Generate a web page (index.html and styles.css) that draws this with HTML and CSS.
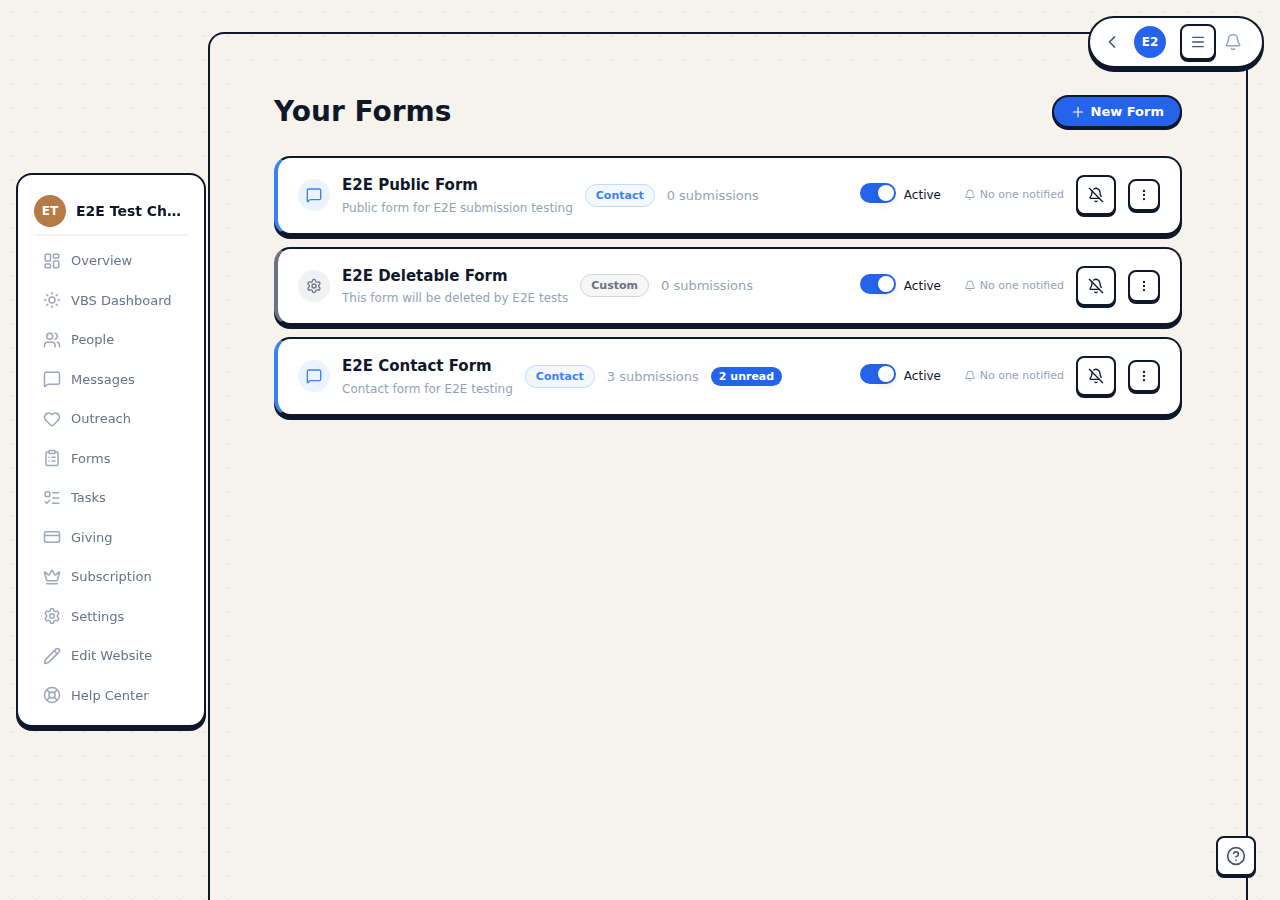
FILE: index.html
```html
<!DOCTYPE html>
<html lang="en">
<head>
    <meta charset="UTF-8">
    <meta name="viewport" content="width=device-width, initial-scale=1.0">
    <title>Your Forms</title>
    <link rel="stylesheet" href="styles.css">
</head>
<body>
    <!-- shared icons -->
    <svg class="sprite" aria-hidden="true">
        <symbol id="i-overview" viewBox="0 0 24 24"><rect x="3" y="3" width="7" height="9" rx="1"/><rect x="14" y="3" width="7" height="5" rx="1"/><rect x="14" y="12" width="7" height="9" rx="1"/><rect x="3" y="16" width="7" height="5" rx="1"/></symbol>
        <symbol id="i-sun" viewBox="0 0 24 24"><circle cx="12" cy="12" r="4"/><path d="M12 2v2M12 20v2M4.93 4.93l1.41 1.41M17.66 17.66l1.41 1.41M2 12h2M20 12h2M6.34 17.66l-1.41 1.41M19.07 4.93l-1.41 1.41"/></symbol>
        <symbol id="i-people" viewBox="0 0 24 24"><path d="M16 21v-2a4 4 0 0 0-4-4H6a4 4 0 0 0-4 4v2"/><path d="M16 3.128a4 4 0 0 1 0 7.744"/><path d="M22 21v-2a4 4 0 0 0-3-3.87"/><circle cx="9" cy="7" r="4"/></symbol>
        <symbol id="i-message" viewBox="0 0 24 24"><path d="M22 17a2 2 0 0 1-2 2H6.828a2 2 0 0 0-1.414.586l-2.202 2.202A.71.71 0 0 1 2 21.286V5a2 2 0 0 1 2-2h16a2 2 0 0 1 2 2z"/></symbol>
        <symbol id="i-heart" viewBox="0 0 24 24"><path d="M2 9.5a5.5 5.5 0 0 1 9.591-3.676.56.56 0 0 0 .818 0A5.49 5.49 0 0 1 22 9.5c0 2.29-1.5 4-3 5.5l-5.492 5.313a2 2 0 0 1-3 .019L5 15c-1.5-1.5-3-3.2-3-5.5"/></symbol>
        <symbol id="i-forms" viewBox="0 0 24 24"><rect x="8" y="2" width="8" height="4" rx="1"/><path d="M16 4h2a2 2 0 0 1 2 2v14a2 2 0 0 1-2 2H6a2 2 0 0 1-2-2V6a2 2 0 0 1 2-2h2"/><path d="M12 11h4M12 16h4M8 11h.01M8 16h.01"/></symbol>
        <symbol id="i-tasks" viewBox="0 0 24 24"><path d="M13 5h8M13 12h8M13 19h8"/><path d="m3 17 2 2 4-4"/><rect x="3" y="4" width="6" height="6" rx="1"/></symbol>
        <symbol id="i-card" viewBox="0 0 24 24"><rect x="2" y="5" width="20" height="14" rx="2"/><path d="M2 10h20"/></symbol>
        <symbol id="i-crown" viewBox="0 0 24 24"><path d="M11.562 3.266a.5.5 0 0 1 .876 0L15.39 8.87a1 1 0 0 0 1.516.294L21.183 5.5a.5.5 0 0 1 .798.519l-2.834 10.246a1 1 0 0 1-.956.734H5.81a1 1 0 0 1-.957-.734L2.02 6.02a.5.5 0 0 1 .798-.519l4.276 3.664a1 1 0 0 0 1.516-.294z"/><path d="M5 21h14"/></symbol>
        <symbol id="i-settings" viewBox="0 0 24 24"><path d="M9.671 4.136a2.34 2.34 0 0 1 4.659 0 2.34 2.34 0 0 0 3.319 1.915 2.34 2.34 0 0 1 2.33 4.033 2.34 2.34 0 0 0 0 3.831 2.34 2.34 0 0 1-2.33 4.033 2.34 2.34 0 0 0-3.319 1.915 2.34 2.34 0 0 1-4.659 0 2.34 2.34 0 0 0-3.32-1.915 2.34 2.34 0 0 1-2.33-4.033 2.34 2.34 0 0 0 0-3.831A2.34 2.34 0 0 1 6.35 6.051a2.34 2.34 0 0 0 3.319-1.915"/><circle cx="12" cy="12" r="3"/></symbol>
        <symbol id="i-pencil" viewBox="0 0 24 24"><path d="M21.174 6.812a1 1 0 0 0-3.986-3.987L3.842 16.174a2 2 0 0 0-.5.83l-1.321 4.352a.5.5 0 0 0 .623.622l4.353-1.32a2 2 0 0 0 .83-.497z"/><path d="m15 5 4 4"/></symbol>
        <symbol id="i-buoy" viewBox="0 0 24 24"><circle cx="12" cy="12" r="10"/><path d="m4.93 4.93 4.24 4.24M14.83 9.17l4.24-4.24M14.83 14.83l4.24 4.24M9.17 14.83l-4.24 4.24"/><circle cx="12" cy="12" r="4"/></symbol>
        <symbol id="i-chevron" viewBox="0 0 24 24"><path d="m15 18-6-6 6-6"/></symbol>
        <symbol id="i-menu" viewBox="0 0 24 24"><path d="M4 5h16M4 12h16M4 19h16"/></symbol>
        <symbol id="i-bell" viewBox="0 0 24 24"><path d="M10.268 21a2 2 0 0 0 3.464 0"/><path d="M3.262 15.326A1 1 0 0 0 4 17h16a1 1 0 0 0 .74-1.673C19.41 13.956 18 12.499 18 8A6 6 0 0 0 6 8c0 4.499-1.411 5.956-2.738 7.326"/></symbol>
        <symbol id="i-bell-off" viewBox="0 0 24 24"><path d="M10.268 21a2 2 0 0 0 3.464 0"/><path d="M17 17H4a1 1 0 0 1-.74-1.673C4.59 13.956 6 12.499 6 8a6 6 0 0 1 .258-1.742"/><path d="m2 2 20 20"/><path d="M8.668 3.01A6 6 0 0 1 18 8c0 2.687.77 4.653 1.707 6.05"/></symbol>
        <symbol id="i-dots" viewBox="0 0 24 24"><circle cx="12" cy="12" r="1"/><circle cx="12" cy="5" r="1"/><circle cx="12" cy="19" r="1"/></symbol>
        <symbol id="i-plus" viewBox="0 0 24 24"><path d="M5 12h14M12 5v14"/></symbol>
        <symbol id="i-help" viewBox="0 0 24 24"><circle cx="12" cy="12" r="10"/><path d="M9.09 9a3 3 0 0 1 5.83 1c0 2-3 3-3 3"/><path d="M12 17h.01"/></symbol>
    </svg>

    <aside class="sidebar">
        <div class="church">
            <span class="avatar avatar-church">ET</span>
            <span class="church-name">E2E Test Church</span>
        </div>
        <nav class="nav">
            <a href="#"><svg><use href="#i-overview"/></svg>Overview</a>
            <a href="#"><svg><use href="#i-sun"/></svg>VBS Dashboard</a>
            <a href="#"><svg><use href="#i-people"/></svg>People</a>
            <a href="#"><svg><use href="#i-message"/></svg>Messages</a>
            <a href="#"><svg><use href="#i-heart"/></svg>Outreach</a>
            <a href="#"><svg><use href="#i-forms"/></svg>Forms</a>
            <a href="#"><svg><use href="#i-tasks"/></svg>Tasks</a>
            <a href="#"><svg><use href="#i-card"/></svg>Giving</a>
            <a href="#"><svg><use href="#i-crown"/></svg>Subscription</a>
            <a href="#"><svg><use href="#i-settings"/></svg>Settings</a>
            <a href="#"><svg><use href="#i-pencil"/></svg>Edit Website</a>
            <a href="#"><svg><use href="#i-buoy"/></svg>Help Center</a>
        </nav>
    </aside>

    <div class="topbar">
        <button class="plain back" aria-label="Collapse"><svg><use href="#i-chevron"/></svg></button>
        <span class="avatar avatar-user">E2</span>
        <button class="box-btn menu-btn" aria-label="Menu"><svg><use href="#i-menu"/></svg></button>
        <button class="plain alerts" aria-label="Notifications"><svg><use href="#i-bell"/></svg></button>
    </div>

    <main class="shell">
        <div class="content">
            <header class="page-head">
                <h1>Your Forms</h1>
                <button class="new-form"><svg><use href="#i-plus"/></svg>New Form</button>
            </header>

            <ul class="forms">
                <li class="form-card contact">
                    <span class="form-icon"><svg><use href="#i-message"/></svg></span>
                    <div class="form-text">
                        <h2>E2E Public Form</h2>
                        <p>Public form for E2E submission testing</p>
                    </div>
                    <span class="tag">Contact</span>
                    <span class="count">0 submissions</span>
                    <div class="actions">
                        <label class="toggle"><input type="checkbox" checked>Active</label>
                        <span class="notified"><svg><use href="#i-bell"/></svg>No one notified</span>
                        <button class="box-btn mute" aria-label="Notifications off"><svg><use href="#i-bell-off"/></svg></button>
                        <button class="box-btn more" aria-label="More"><svg><use href="#i-dots"/></svg></button>
                    </div>
                </li>
                <li class="form-card custom">
                    <span class="form-icon"><svg><use href="#i-settings"/></svg></span>
                    <div class="form-text">
                        <h2>E2E Deletable Form</h2>
                        <p>This form will be deleted by E2E tests</p>
                    </div>
                    <span class="tag">Custom</span>
                    <span class="count">0 submissions</span>
                    <div class="actions">
                        <label class="toggle"><input type="checkbox" checked>Active</label>
                        <span class="notified"><svg><use href="#i-bell"/></svg>No one notified</span>
                        <button class="box-btn mute" aria-label="Notifications off"><svg><use href="#i-bell-off"/></svg></button>
                        <button class="box-btn more" aria-label="More"><svg><use href="#i-dots"/></svg></button>
                    </div>
                </li>
                <li class="form-card contact">
                    <span class="form-icon"><svg><use href="#i-message"/></svg></span>
                    <div class="form-text">
                        <h2>E2E Contact Form</h2>
                        <p>Contact form for E2E testing</p>
                    </div>
                    <span class="tag">Contact</span>
                    <span class="count">3 submissions</span>
                    <span class="unread">2 unread</span>
                    <div class="actions">
                        <label class="toggle"><input type="checkbox" checked>Active</label>
                        <span class="notified"><svg><use href="#i-bell"/></svg>No one notified</span>
                        <button class="box-btn mute" aria-label="Notifications off"><svg><use href="#i-bell-off"/></svg></button>
                        <button class="box-btn more" aria-label="More"><svg><use href="#i-dots"/></svg></button>
                    </div>
                </li>
            </ul>
        </div>
    </main>

    <button class="box-btn help" aria-label="Help"><svg><use href="#i-help"/></svg></button>
</body>
</html>
```
FILE: styles.css
```css
*{
    box-sizing: border-box;
    margin: 0;
    padding: 0;
}
body{
    font-family: "DejaVu Sans", sans-serif;
    font-size: 13px;
    line-height: 1.5;
    color: #0f172a;
    background: #f6f3ec radial-gradient(circle, #e5e3df 1px, transparent 1px) 0 0 / 24px 24px;
}
button{
    font: inherit;
    color: inherit;
    cursor: pointer;
}
svg{
    flex: none;
    width: 18px;
    height: 18px;
    fill: none;
    stroke: currentColor;
    stroke-width: 2;
    stroke-linecap: round;
    stroke-linejoin: round;
}
.sprite{
    display: none;
}

.avatar{
    display: flex;
    flex: none;
    align-items: center;
    justify-content: center;
    width: 32px;
    height: 32px;
    border-radius: 50%;
    color: #fff;
    font-size: 12px;
    font-weight: bold;
}
.avatar-church{
    background: #b57a45;
}
.avatar-user{
    background: #2563eb;
}

/* white square buttons with the hard shadow */
.box-btn{
    display: flex;
    flex: none;
    align-items: center;
    justify-content: center;
    width: 40px;
    height: 40px;
    background: #fff;
    border: 2px solid #0f172a;
    border-radius: 8px;
    box-shadow: 0 2px 0 #0f172a;
}
.box-btn svg{
    width: 16px;
    height: 16px;
}
.plain{
    display: flex;
    background: none;
    border: 0;
}

/* sidebar */
.sidebar{
    position: fixed;
    z-index: 2;
    top: 50%;
    left: 16px;
    width: 190px;
    padding: 16px 16px 10px;
    transform: translateY(-50%);
    background: #fff;
    border: 2px solid #0f172a;
    border-radius: 16px;
    box-shadow: 0 4px 0 #0f172a;
}
.church{
    display: flex;
    align-items: center;
    gap: 10px;
    padding: 4px 0 7px;
    border-bottom: 2px solid #f1f5f9;
}
.church-name{
    overflow: hidden;
    font-size: 14px;
    font-weight: bold;
    white-space: nowrap;
    text-overflow: ellipsis;
}
.nav{
    padding-top: 5px;
}
.nav a{
    display: flex;
    align-items: center;
    gap: 10px;
    padding: 10px 9px;
    color: #64748b;
    text-decoration: none;
}
.nav svg{
    color: #9ca8ba;
}

/* top right pill */
.topbar{
    position: fixed;
    z-index: 2;
    top: 16px;
    right: 16px;
    display: flex;
    align-items: center;
    height: 52px;
    padding: 0 20px 0 12px;
    background: #fff;
    border: 2px solid #0f172a;
    border-radius: 26px;
    box-shadow: 0 4px 0 #0f172a;
}
.back{
    margin-right: 12px;
    color: #475569;
}
.back svg{
    width: 20px;
    height: 20px;
}
.menu-btn{
    width: 36px;
    height: 36px;
    margin: 0 8px 0 14px;
    color: #475569;
}
.alerts{
    color: #94a3b8;
}

/* page */
.shell{
    min-height: calc(100vh - 32px);
    margin: 32px 32px 0 208px;
    padding: 32px 40px 0 32px;
    border: 2px solid #0f172a;
    border-bottom: 0;
    border-radius: 16px 16px 0 0;
}
/* covers the dots behind the list */
.content{
    min-height: calc(100vh - 66px);
    padding: 24px 24px 32px 32px;
    background: #f6f3ec;
}
.page-head{
    display: flex;
    align-items: center;
    justify-content: space-between;
    margin-bottom: 23px;
}
h1{
    font-size: 28px;
    line-height: 43px;
}
.new-form{
    display: flex;
    align-items: center;
    gap: 5px;
    padding: 5px 16px;
    color: #fff;
    font-weight: bold;
    background: #2563eb;
    border: 2px solid #0f172a;
    border-radius: 20px;
    box-shadow: 0 2px 0 #0f172a;
}
.new-form svg{
    width: 16px;
    height: 16px;
    stroke-width: 1.8;
}

.forms{
    display: flex;
    flex-direction: column;
    gap: 12px;
    list-style: none;
}
.form-card{
    --tint: #3b82f6;
    --soft: #ebf3fe;
    --pill: #f3f8ff;
    --line: #c4dafc;
    display: flex;
    align-items: center;
    gap: 12px;
    padding: 16px 20px;
    background: #fff;
    border: 2px solid #0f172a;
    border-left: 4px solid var(--tint);
    border-radius: 16px;
    box-shadow: 0 4px 0 #0f172a;
}
.form-card.custom{
    --tint: #6b7280;
    --soft: #f0f1f2;
    --pill: #f6f6f7;
    --line: #d3d5d9;
}
.form-icon{
    display: flex;
    flex: none;
    align-items: center;
    justify-content: center;
    width: 32px;
    height: 32px;
    border-radius: 50%;
    color: var(--tint);
    background: var(--soft);
}
.form-icon svg{
    width: 16px;
    height: 16px;
}
.form-text h2{
    font-size: 15px;
}
.form-text p{
    margin-top: 2px;
    color: #94a3b8;
    font-size: 12px;
}
.tag{
    padding: 2px 10px;
    color: var(--tint);
    font-size: 11px;
    font-weight: bold;
    line-height: 17px;
    background: var(--pill);
    border: 1px solid var(--line);
    border-radius: 12px;
}
.count{
    color: #94a3b8;
}
.unread{
    padding: 1px 8px;
    color: #fff;
    font-size: 11px;
    font-weight: bold;
    line-height: 17px;
    background: #2563eb;
    border-radius: 10px;
}
.actions{
    display: flex;
    align-items: center;
    gap: 12px;
    margin-left: auto;
}
.toggle{
    display: flex;
    gap: 8px;
    width: 92px;
    font-size: 12px;
    line-height: 24px;
}
.toggle input{
    flex: none;
    width: 36px;
    height: 20px;
    padding: 2px;
    appearance: none;
    background: #2563eb;
    border-radius: 10px;
}
.toggle input::before{
    content: "";
    display: block;
    width: 16px;
    height: 16px;
    background: #fff;
    border-radius: 50%;
    box-shadow: 0 4px 8px rgba(15, 23, 42, 0.1);
}
.toggle input:checked::before{
    margin-left: auto;
}
.notified{
    display: flex;
    align-items: center;
    gap: 4px;
    color: #94a3b8;
    font-size: 11px;
}
.notified svg{
    width: 12px;
    height: 12px;
}
.more{
    width: 32px;
    height: 32px;
}
.more svg{
    width: 14px;
    height: 14px;
}

.help{
    position: fixed;
    z-index: 2;
    right: 24px;
    bottom: 24px;
    color: #475569;
}
.help svg{
    width: 20px;
    height: 20px;
}
```
